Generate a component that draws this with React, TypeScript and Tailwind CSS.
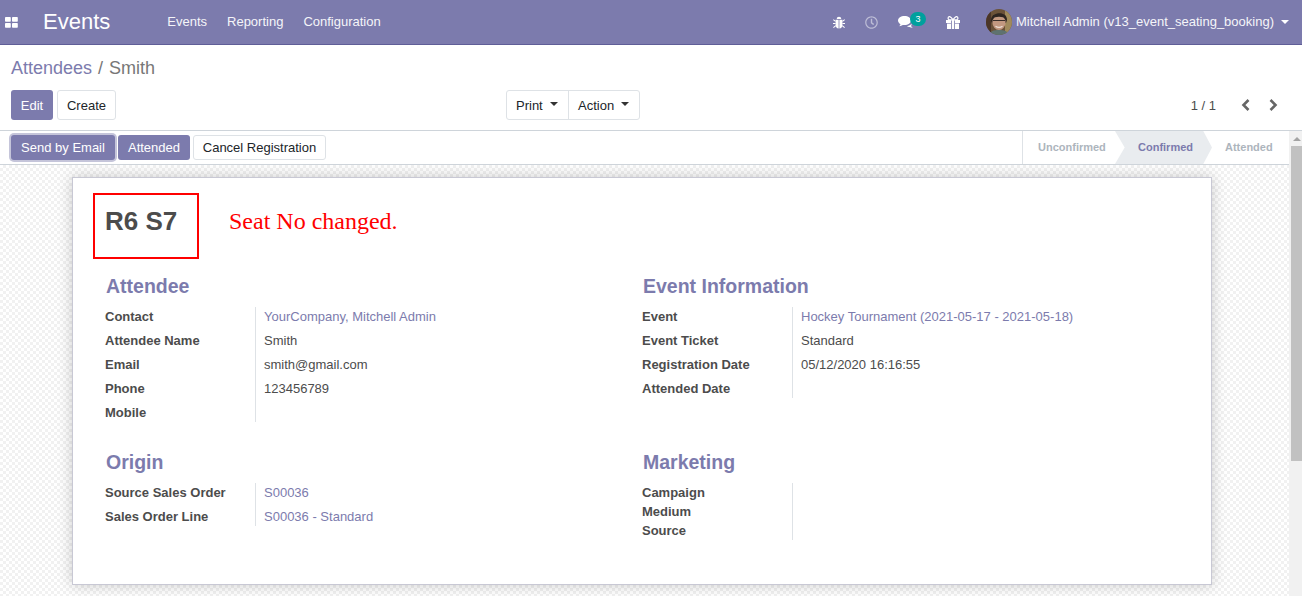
import { FaRegClock } from "react-icons/fa";

function Caret({ className = "" }: { className?: string }) {
  return <span className={"inline-block w-0 h-0 border-x-[4px] border-x-transparent border-t-[4px] border-t-current " + className} />;
}

function Avatar() {
  return (
    <svg viewBox="0 0 26 26" className="w-[26px] h-[26px] rounded-full shrink-0">
      <rect width="26" height="26" fill="#6b5238" />
      <rect x="19" width="7" height="26" fill="#a08a5c" />
      <rect width="5" height="26" fill="#4a3527" />
      <g className="blur-[0.5px]">
        <path d="M5 12C4 3 21 1 21 11l-1 3H6z" fill="#2e2520" />
        <ellipse cx="13" cy="13.500" rx="6.600" ry="7.500" fill="#c29880" />
        <path d="M6.500 10c2-3 11-3 13 0l-.5-4H7z" fill="#2e2520" />
        <path d="M7 11.500h12" stroke="#3a2f2a" strokeWidth="1" fill="none" />
        <path d="M9.500 17.300c2 1.300 5 1.300 7 0" stroke="#ecdfd5" strokeWidth="1.200" fill="none" />
        <path d="M3 26c1-4 5-5 10-5s9 1 10 5z" fill="#5e7270" />
      </g>
    </svg>
  );
}

function BugIcon() {
  return (
    <svg viewBox="0 0 12 13" className="w-[12px] h-[13px]" fill="#fff">
      <path d="M3.700 3a2.300 2.300 0 0 1 4.600 0z" />
      <path d="M2.600 3.800h3v8.700C3.800 12.300 2.600 11 2.600 9z" />
      <path d="M6.400 3.800h3V9c0 2-1.200 3.300-3 3.500z" />
      <path d="M.3 3.600l2.300 1.800M11.700 3.600L9.400 5.400M0 7.500h2.600M12 7.500H9.400M.4 11.600l2.400-2M11.600 11.600l-2.400-2" stroke="#fff" strokeWidth="1.100" fill="none" />
    </svg>
  );
}

function CommentsIcon() {
  return (
    <svg viewBox="0 0 15 13" className="w-[15px] h-[13px]" fill="#fff">
      <path d="M6.500 0C2.900 0 0 2 0 4.600c0 1.500 1 2.800 2.500 3.600-.2.800-.7 1.500-1.300 2 1.300-.1 2.600-.6 3.600-1.300.6.100 1.100.2 1.700.2 3.600 0 6.500-2 6.500-4.500S10.100 0 6.500 0z" />
      <path d="M9 10.300c2-.3 3.700-1.200 4.600-2.700.1.500 0 1.500-.5 2.300.3.600.9 1.300 1.700 1.900-1.200.1-2.400-.2-3.300-.8-.9.100-1.800-.1-2.500-.7z" />
    </svg>
  );
}

function GiftIcon() {
  return (
    <svg viewBox="0 0 14 13" className="w-[14px] h-[13px]" fill="#fff">
      <path d="M7 4C5.500 1.500 4.300.5 3.200.7 1.800 1 1.700 3 3 3.600 4 4 5.500 4 7 4zM7 4c1.500-2.500 2.700-3.500 3.800-3.300C12.200 1 12.300 3 11 3.600 10 4 8.500 4 7 4z" fill="none" stroke="#fff" strokeWidth="1.200" />
      <rect x="0" y="4" width="5" height="3" />
      <rect x="9" y="4" width="5" height="3" />
      <rect x="5.800" y="4" width="2.400" height="9" />
      <rect x="1" y="7.600" width="4" height="5.400" />
      <rect x="9" y="7.600" width="4" height="5.400" />
    </svg>
  );
}

function Row({ label, value, link, tall }: { label: string; value?: string; link?: boolean; tall?: boolean }) {
  return (
    <div className="flex leading-[19px]">
      <div className={tall ? "w-[151px] shrink-0 border-r border-[#dee2e6] font-bold text-[#4c4c4c] h-[24px]" : "w-[151px] shrink-0 border-r border-[#dee2e6] font-bold text-[#4c4c4c] h-[19px]"}>{label}</div>
      <div className={link ? "pl-[8px] text-[#7c7bad]" : "pl-[8px] text-[#4c4c4c]"}>{value}</div>
    </div>
  );
}

function Group({ title, children }: { title: string; children: React.ReactNode }) {
  return (
    <div>
      <div className="pl-[1px] text-[19.5px] leading-[24px] font-bold text-[#7c7bad] mb-[9px]">{title}</div>
      <div className="[&>div:last-child>div:first-child]:h-[19px]">{children}</div>
    </div>
  );
}

export default function App() {
  return (
    <div className="h-[596px] w-[1302px] overflow-hidden flex flex-col bg-white text-[13px] font-['Liberation_Sans',sans-serif] text-[#212529]">
      <nav className="h-[45px] shrink-0 bg-[#7c7bad] border-b border-[#5f5e97] flex items-center text-white">
        <svg viewBox="0 0 13 11" className="ml-[5px] w-[13px] h-[11px]" fill="#fff">
          <rect x="0" y="0" width="5.800" height="4.800" rx="0.800" />
          <rect x="7" y="0" width="5.800" height="4.800" rx="0.800" />
          <rect x="0" y="6" width="5.800" height="4.800" rx="0.800" />
          <rect x="7" y="6" width="5.800" height="4.800" rx="0.800" />
        </svg>
        <span className="ml-[25px] text-[22px] leading-none">Events</span>
        <div className="ml-[57px] flex gap-[20px] text-[#f5f5f9]">
          <span>Events</span>
          <span>Reporting</span>
          <span>Configuration</span>
        </div>
        <div className="ml-auto flex items-center">
          <BugIcon />
          <FaRegClock className="ml-[20px] w-[13px] h-[13px] text-[#bdbdd6]" />
          <div className="relative ml-[20px] mr-[33px] flex">
            <CommentsIcon />
            <span className="absolute left-[12px] top-[-4px] w-[16px] h-[14px] rounded-full bg-[#00a09d] text-[9px] leading-[14px] text-center">3</span>
          </div>
          <GiftIcon />
          <div className="ml-[26px]"><Avatar /></div>
          <span className="ml-[4px] text-[#f5f5f9]">Mitchell Admin (v13_event_seating_booking)</span>
          <Caret className="ml-[7px] mr-[13px]" />
        </div>
      </nav>

      <div className="h-[86px] shrink-0 px-[11px] border-b border-[#ced4da] bg-white">
        <div className="pt-[11px] h-[45px] text-[18px] leading-[24px] text-[#777]">
          <span className="text-[#7c7bad]">Attendees</span>
          <span className="mx-[6px]">/</span>
          <span>Smith</span>
        </div>
        <div className="flex items-center h-[30px]">
          <div className="flex gap-[4px] w-[495px]">
            <button className="h-[30px] w-[42px] pt-[1px] rounded-[3px] bg-[#7c7bad] text-white">Edit</button>
            <button className="h-[30px] w-[59px] pt-[1px] rounded-[3px] border border-[#dee2e6] bg-white">Create</button>
          </div>
          <div className="flex h-[30px] rounded-[3px] border border-[#dee2e6]">
            <button className="w-[62px] flex items-center pt-[1px] pl-[9px] border-r border-[#dee2e6]">Print<Caret className="ml-[7px] mb-[3px] text-[#333]" /></button>
            <button className="w-[70px] flex items-center pt-[1px] pl-[9px]">Action<Caret className="ml-[7px] mb-[3px] text-[#333]" /></button>
          </div>
          <div className="ml-auto flex items-center text-[#4c4c4c]">
            <span className="pt-[1px]">1 / 1</span>
            <svg viewBox="0 0 9 12" className="ml-[25px] w-[9px] h-[12px]" fill="none" stroke="#666" strokeWidth="2.600">
              <path d="M7.500 1L2.500 6l5 5" />
            </svg>
            <svg viewBox="0 0 9 12" className="ml-[19px] mr-[13px] w-[9px] h-[12px]" fill="none" stroke="#666" strokeWidth="2.600">
              <path d="M1.500 1l5 5-5 5" />
            </svg>
          </div>
        </div>
      </div>

      <div className="flex flex-1 min-h-0">
        <div className="flex-1 min-w-0 flex flex-col">
          <div className="h-[34px] shrink-0 border-b border-[#ced4da] bg-white flex items-center justify-between">
            <div className="flex items-center pl-[11px] gap-[3px]">
              <button className="h-[25px] w-[104px] rounded-[3px] bg-[#7c7bad] text-white ring-[2px] ring-[#c5c5da]">Send by Email</button>
              <button className="h-[25px] w-[72px] rounded-[3px] bg-[#7c7bad] text-white">Attended</button>
              <button className="h-[25px] w-[133px] rounded-[3px] border border-[#dee2e6] bg-white">Cancel Registration</button>
            </div>
            <div className="flex h-full text-[11px] font-bold border-l border-[#dee2e6] relative">
              <span className="w-[92px] flex items-center pl-[15px] text-[#adb5bd]">Unconfirmed</span>
              <svg viewBox="0 0 100 33" preserveAspectRatio="none" className="absolute left-[92px] top-0 h-[33px] w-[97px]">
                <polygon points="0,0 91,0 100,16.500 91,33 0,33 10,16.500" fill="#e9ecef" />
              </svg>
              <span className="relative w-[95px] flex items-center pl-[23px] text-[#7c7bad]">Confirmed</span>
              <span className="w-[79px] flex items-center pl-[15px] text-[#adb5bd]">Attended</span>
            </div>
          </div>
          <div className="flex-1 min-h-0 overflow-hidden pt-[12px] pl-[72px] bg-[repeating-conic-gradient(#f1f1f1_0_25%,#ffffff_0_50%)] bg-[length:6px_6px]">
            <div className="w-[1140px] h-[408px] bg-white border border-[#c8c8d4] shadow-[0_0_14px_rgba(0,0,0,0.2)] pt-[15px] pl-[20px]">
              <div className="flex items-start">
                <div className="w-[106px] h-[66px] border-2 border-[#ff0000] pl-[10px] pt-[11px] text-[26px] leading-[31px] font-bold text-[#4c4c4c]">R6 S7</div>
                <div className="ml-[30px] mt-[13px] text-[24px] leading-[30px] text-[#ff0000] font-['Liberation_Serif',serif]">Seat No changed.</div>
              </div>
              <div className="grid grid-cols-[537px_1fr] pl-[12px] pt-[15px]">
                <div className="min-w-0">
                  <Group title="Attendee">
                    <Row tall label="Contact" value="YourCompany, Mitchell Admin" link />
                    <Row tall label="Attendee Name" value="Smith" />
                    <Row tall label="Email" value="smith@gmail.com" />
                    <Row tall label="Phone" value="123456789" />
                    <Row tall label="Mobile" />
                  </Group>
                </div>
                <div className="min-w-0">
                  <Group title="Event Information">
                    <Row tall label="Event" value="Hockey Tournament (2021-05-17 - 2021-05-18)" link />
                    <Row tall label="Event Ticket" value="Standard" />
                    <Row tall label="Registration Date" value="05/12/2020 16:16:55" />
                    <Row tall label="Attended Date" />
                  </Group>
                </div>
                <div className="min-w-0 mt-[28px]">
                  <Group title="Origin">
                    <Row tall label="Source Sales Order" value="S00036" link />
                    <Row tall label="Sales Order Line" value="S00036 - Standard" link />
                  </Group>
                </div>
                <div className="min-w-0 mt-[28px]">
                  <Group title="Marketing">
                    <Row label="Campaign" />
                    <Row label="Medium" />
                    <Row label="Source" />
                  </Group>
                </div>
              </div>
            </div>
          </div>
        </div>
        <div className="w-[13px] shrink-0 bg-[#f1f1f1] flex flex-col items-end">
          <div className="w-[11px] h-[15px] flex items-center justify-center">
            <span className="w-0 h-0 border-x-[4px] border-x-transparent border-b-[4px] border-b-[#a3a3a3]" />
          </div>
          <div className="w-[11px] h-[315px] bg-[#c1c1c1]" />
        </div>
      </div>
    </div>
  );
}
